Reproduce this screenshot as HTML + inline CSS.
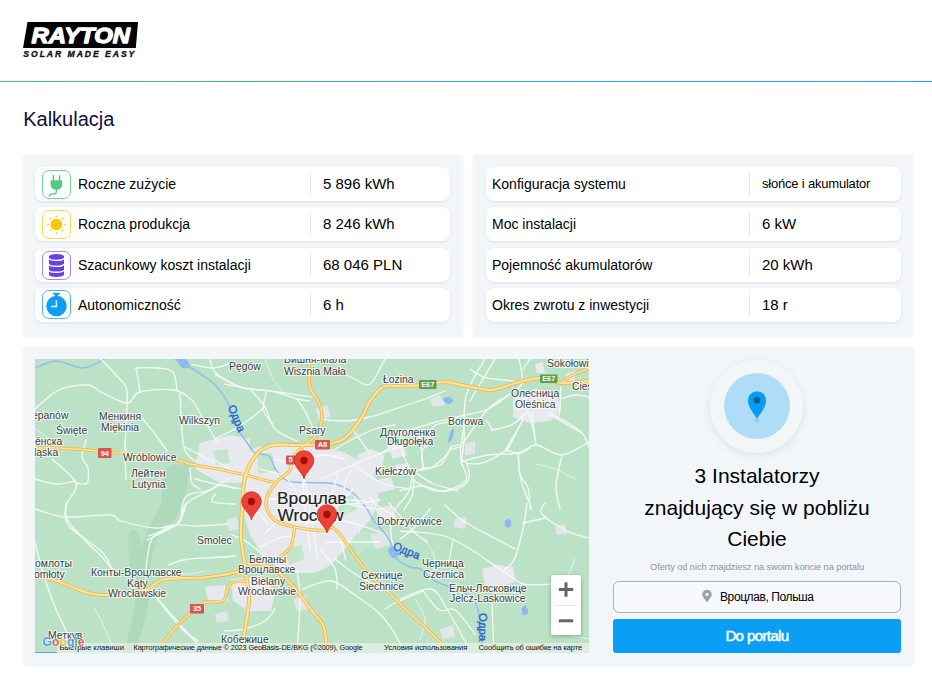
<!DOCTYPE html>
<html><head><meta charset="utf-8">
<style>
*{box-sizing:border-box;margin:0;padding:0}
html,body{width:932px;height:684px;overflow:hidden;background:#fff;font-family:"Liberation Sans",sans-serif;color:#000}
.abs{position:absolute}
.hline{position:absolute;left:0;top:81px;width:932px;height:1px;background:linear-gradient(90deg,#3cbf9e,#1aa6e4)}
.title{position:absolute;left:23.2px;top:108px;font-size:20px;line-height:23px;color:#0d0f3a}
.panel{position:absolute;background:#f3f6f9;border-radius:4px;box-shadow:0 1px 3px rgba(20,40,80,.06)}
.card{position:absolute;background:#fff;border-radius:8px;box-shadow:0 1px 3px rgba(20,40,80,.10);height:34px}
.card .lbl{position:absolute;top:8px;font-size:14px;line-height:18px;white-space:nowrap}
.card .div{position:absolute;top:6px;width:1px;height:22px;background:#e3e6ec}
.card .val{position:absolute;top:8px;font-size:15px;line-height:18px;white-space:nowrap}
.ico{position:absolute;left:7px;top:3px;width:29px;height:29px;border-radius:7px;border:1px solid}
.ico svg{position:absolute;left:-1px;top:-1px}
</style></head><body>
<!-- logo -->
<svg class="abs" style="left:0;top:0" width="160" height="70">
  <polygon points="27.5,22 138,22 135.8,48 23,48" fill="#000"/>
  <text x="31.5" y="42.8" font-family="Liberation Sans" font-weight="bold" font-style="italic" font-size="21.5" fill="#fff" stroke="#fff" stroke-width="1.3" stroke-linejoin="round" textLength="98.5" lengthAdjust="spacingAndGlyphs">RAYTON</text>
  <text x="23.3" y="56.8" font-family="Liberation Sans" font-weight="bold" font-style="italic" font-size="8.6" fill="#111" stroke="#111" stroke-width="0.35" textLength="111" lengthAdjust="spacing">SOLAR MADE EASY</text>
</svg>
<div class="hline"></div>
<div class="title">Kalkulacja</div>

<div class="panel" style="left:22.5px;top:155px;width:440px;height:180.5px"></div>
<div class="panel" style="left:473px;top:155px;width:440px;height:180.5px"></div>

<!-- left cards -->
<div class="card" style="left:35px;top:167px;width:415px">
  <div class="ico" style="border-color:#72d39f"><svg width="29" height="29" viewBox="2.2 3.7 28.6 28.9" preserveAspectRatio="none">
<rect x="12.8" y="8.8" width="1.4" height="5.6" fill="#52c986"/><rect x="18.8" y="8.8" width="1.4" height="5.6" fill="#52c986"/>
<path d="M10.7 14 H22.1 V18.2 C22.1 21.6 19.6 23.4 16.4 23.4 C13.2 23.4 10.7 21.6 10.7 18.2 Z" fill="#52c986"/>
<path d="M16.4 23 V25.2 C16.4 27.3 14.8 27.8 13.2 27.5 C11.4 27.2 10.2 27.9 9.2 29.6" fill="none" stroke="#52c986" stroke-width="1.3" stroke-linecap="round"/>
</svg></div>
  <div class="lbl" style="left:43px">Roczne zużycie</div>
  <div class="div" style="left:275px"></div>
  <div class="val" style="left:288px">5 896 kWh</div>
</div>
<div class="card" style="left:35px;top:207px;width:415px">
  <div class="ico" style="border-color:#ffd54f;top:2.5px"><svg width="29" height="29" viewBox="2.2 3.5 28.6 29.1" preserveAspectRatio="none">
<circle cx="16.4" cy="18" r="5.7" fill="#ffc400"/><line x1="16.40" y1="10.20" x2="16.40" y2="9.40" stroke="#ffc400" stroke-width="1.3" stroke-linecap="round"/><line x1="21.92" y1="12.48" x2="22.48" y2="11.92" stroke="#ffc400" stroke-width="1.3" stroke-linecap="round"/><line x1="24.20" y1="18.00" x2="25.00" y2="18.00" stroke="#ffc400" stroke-width="1.3" stroke-linecap="round"/><line x1="21.92" y1="23.52" x2="22.48" y2="24.08" stroke="#ffc400" stroke-width="1.3" stroke-linecap="round"/><line x1="16.40" y1="25.80" x2="16.40" y2="26.60" stroke="#ffc400" stroke-width="1.3" stroke-linecap="round"/><line x1="10.88" y1="23.52" x2="10.32" y2="24.08" stroke="#ffc400" stroke-width="1.3" stroke-linecap="round"/><line x1="8.60" y1="18.00" x2="7.80" y2="18.00" stroke="#ffc400" stroke-width="1.3" stroke-linecap="round"/><line x1="10.88" y1="12.48" x2="10.32" y2="11.92" stroke="#ffc400" stroke-width="1.3" stroke-linecap="round"/>
</svg></div>
  <div class="lbl" style="left:43px">Roczna produkcja</div>
  <div class="div" style="left:275px"></div>
  <div class="val" style="left:288px">8 246 kWh</div>
</div>
<div class="card" style="left:35px;top:247.5px;width:415px">
  <div class="ico" style="border-color:#a884f0"><svg width="29" height="29" viewBox="2.2 3.6 28.6 28.6" preserveAspectRatio="none">
<path d="M9.1 9.1 A7.4 2.65 0 0 1 23.9 9.1 V26.8 A7.4 2.5 0 0 1 9.1 26.8 Z" fill="#6b3fe2"/>
<path d="M9 10.6 A7.5 2.3 0 0 0 24 10.6" fill="none" stroke="#fff" stroke-width="1.35"/>
<path d="M9 16.5 A7.5 2.3 0 0 0 24 16.5" fill="none" stroke="#fff" stroke-width="1.35"/>
<path d="M9 22.3 A7.5 2.3 0 0 0 24 22.3" fill="none" stroke="#fff" stroke-width="1.35"/>
</svg></div>
  <div class="lbl" style="left:43px">Szacunkowy koszt instalacji</div>
  <div class="div" style="left:275px"></div>
  <div class="val" style="left:288px">68 046 PLN</div>
</div>
<div class="card" style="left:35px;top:288px;width:415px">
  <div class="ico" style="border-color:#4db5f5;top:2.2px"><svg width="29" height="29" viewBox="2.2 3.2 28.6 28.6" preserveAspectRatio="none">
<rect x="13" y="6.1" width="6.9" height="1.6" fill="#0a9ef7"/><rect x="15" y="7" width="2.9" height="3" fill="#0a9ef7"/>
<circle cx="16.5" cy="19" r="10.1" fill="#0a9ef7"/>
<path d="M16.4 13.2 V19.4 H11" fill="none" stroke="#fff" stroke-width="1.4"/>
</svg></div>
  <div class="lbl" style="left:43px">Autonomiczność</div>
  <div class="div" style="left:275px"></div>
  <div class="val" style="left:288px">6 h</div>
</div>

<!-- right cards -->
<div class="card" style="left:486px;top:167px;width:415px">
  <div class="lbl" style="left:6px">Konfiguracja systemu</div>
  <div class="div" style="left:263px"></div>
  <div class="val" style="left:276px;font-size:13px;letter-spacing:-0.2px">słońce i akumulator</div>
</div>
<div class="card" style="left:486px;top:207px;width:415px">
  <div class="lbl" style="left:6px">Moc instalacji</div>
  <div class="div" style="left:263px"></div>
  <div class="val" style="left:276px">6 kW</div>
</div>
<div class="card" style="left:486px;top:247.5px;width:415px">
  <div class="lbl" style="left:6px">Pojemność akumulatorów</div>
  <div class="div" style="left:263px"></div>
  <div class="val" style="left:276px">20 kWh</div>
</div>
<div class="card" style="left:486px;top:288px;width:415px">
  <div class="lbl" style="left:6px">Okres zwrotu z inwestycji</div>
  <div class="div" style="left:263px"></div>
  <div class="val" style="left:276px">18 r</div>
</div>

<!-- bottom panel -->
<div class="panel" style="left:22.5px;top:347px;width:891px;height:318px"></div>
<div id="map" class="abs" style="left:35px;top:359px;width:554px;height:294px;background:#bbe2c6;overflow:hidden">
<svg width="554" height="294" viewBox="0 0 554 294" style="position:absolute;left:0;top:0">
<rect width="554" height="294" fill="#bbe2c6"/>
<path d="M140.0 110.0 C135.0 116.2 130.5 134.8 126.0 145.0 C121.5 155.2 116.7 162.2 113.0 171.0 C109.3 179.8 106.0 189.2 104.0 198.0 C102.0 206.8 101.7 215.8 101.0 224.0 C100.3 232.2 101.5 237.3 100.0 247.0 C98.5 256.7 93.7 274.2 92.0 282.0 C90.3 289.8 88.7 292.0 90.0 294.0 C91.3 296.0 97.7 296.0 100.0 294.0 C102.3 292.0 101.8 289.8 104.0 282.0 C106.2 274.2 111.3 256.7 113.0 247.0 C114.7 237.3 113.3 232.2 114.0 224.0 C114.7 215.8 115.0 206.8 117.0 198.0 C119.0 189.2 122.0 179.8 126.0 171.0 C130.0 162.2 136.0 155.5 141.0 145.0 C146.0 134.5 156.2 113.8 156.0 108.0 C155.8 102.2 145.0 103.8 140.0 110.0Z" fill="#aed9ba"/>
<path d="M130.0 112.0 C133.7 103.3 146.3 105.0 150.0 108.0 C153.7 111.0 153.7 121.3 152.0 130.0 C150.3 138.7 144.0 155.0 140.0 160.0 C136.0 165.0 129.7 168.0 128.0 160.0 C126.3 152.0 126.3 120.7 130.0 112.0Z" fill="#aed9ba"/>
<path d="M94.0 176.0 C95.3 170.0 102.0 170.3 104.0 176.0 C106.0 181.7 107.3 204.0 106.0 210.0 C104.7 216.0 98.0 217.7 96.0 212.0 C94.0 206.3 92.7 182.0 94.0 176.0Z" fill="#aed9ba"/>
<polygon points="209.0,95.0 222.0,88.0 240.0,86.0 262.0,86.0 290.0,88.0 310.0,94.0 330.0,104.0 342.0,122.0 344.0,142.0 336.0,160.0 322.0,175.0 310.0,190.0 296.0,206.0 280.0,214.0 262.0,214.0 242.0,208.0 228.0,196.0 216.0,178.0 210.0,160.0 207.0,130.0" fill="#e8e9ee"/>
<polygon points="165.0,84.0 195.0,76.0 215.0,80.0 214.0,106.0 207.0,124.0 185.0,124.0 160.0,110.0" fill="#e8e9ee"/>
<polygon points="322.0,96.0 336.0,90.0 350.0,96.0 346.0,112.0 332.0,118.0" fill="#e8e9ee"/>
<polygon points="352.0,86.0 368.0,84.0 372.0,96.0 358.0,100.0" fill="#e8e9ee"/>
<polygon points="338.0,122.0 356.0,118.0 360.0,130.0 344.0,134.0" fill="#e8e9ee"/>
<polygon points="360.0,106.0 372.0,104.0 374.0,114.0 362.0,116.0" fill="#e8e9ee"/>
<polygon points="196.0,220.0 225.0,218.0 240.0,232.0 236.0,252.0 214.0,252.0 198.0,242.0" fill="#e8e9ee"/>
<polygon points="170.0,228.0 190.0,226.0 193.0,242.0 174.0,244.0" fill="#e8e9ee"/>
<polygon points="478.0,40.0 500.0,30.0 522.0,36.0 526.0,50.0 515.0,62.0 495.0,64.0 478.0,58.0" fill="#e8e9ee"/>
<polygon points="500.0,5.0 508.0,3.0 510.0,14.0 502.0,14.0" fill="#e8e9ee"/>
<polygon points="530.0,15.0 540.0,12.0 540.0,22.0 532.0,22.0" fill="#e8e9ee"/>
<polygon points="447.0,210.0 462.0,206.0 478.0,208.0 481.0,222.0 466.0,228.0 450.0,226.0" fill="#e8e9ee"/>
<polygon points="340.0,150.0 356.0,146.0 362.0,160.0 348.0,166.0" fill="#e8e9ee"/>
<polygon points="222.0,94.0 237.0,94.0 240.0,112.0 224.0,115.0" fill="#c3e5cc"/>
<polygon points="300.0,140.0 318.0,136.0 322.0,150.0 306.0,158.0" fill="#c3e5cc"/>
<polygon points="250.0,190.0 266.0,186.0 270.0,200.0 254.0,206.0" fill="#c3e5cc"/>
<polygon points="318.0,178.0 332.0,170.0 338.0,186.0 322.0,196.0" fill="#c3e5cc"/>
<polygon points="178.0,92.0 192.0,90.0 195.0,104.0 181.0,106.0" fill="#c3e5cc"/>
<polygon points="395.0,40.0 405.0,36.0 410.0,46.0 398.0,48.0" fill="#e1e7e6"/>
<polygon points="280.0,50.0 292.0,46.0 296.0,58.0 284.0,60.0" fill="#e1e7e6"/>
<polygon points="420.0,160.0 432.0,158.0 430.0,170.0 418.0,168.0" fill="#e1e7e6"/>
<polygon points="405.0,270.0 418.0,266.0 420.0,278.0 408.0,280.0" fill="#e1e7e6"/>
<polygon points="152.0,60.0 160.0,56.0 162.0,66.0 154.0,66.0" fill="#e1e7e6"/>
<polygon points="335.0,175.0 352.0,172.0 356.0,186.0 340.0,190.0" fill="#e1e7e6"/>
<polygon points="192.0,160.0 202.0,158.0 204.0,170.0 194.0,172.0" fill="#e1e7e6"/>
<polygon points="258.0,240.0 270.0,236.0 274.0,250.0 262.0,252.0" fill="#e1e7e6"/>
<polygon points="180.0,255.0 192.0,252.0 194.0,262.0 182.0,264.0" fill="#e1e7e6"/>
<polygon points="430.0,85.0 440.0,82.0 440.0,95.0 430.0,96.0" fill="#e1e7e6"/>
<polygon points="520.0,168.0 530.0,165.0 532.0,175.0 522.0,176.0" fill="#e1e7e6"/>
<path d="M142.0 1.0 C142.3 -0.5 147.8 -1.0 150.0 0.0 C152.2 1.0 155.3 5.5 155.0 7.0 C154.7 8.5 150.2 10.0 148.0 9.0 C145.8 8.0 141.7 2.5 142.0 1.0Z" fill="#8ab8f0"/>
<path d="M408.0 40.0 C408.2 38.8 412.3 37.7 414.0 38.0 C415.7 38.3 418.2 40.8 418.0 42.0 C417.8 43.2 414.7 45.3 413.0 45.0 C411.3 44.7 407.8 41.2 408.0 40.0Z" fill="#8ab8f0"/>
<path d="M353.0 191.0 C353.2 189.0 357.2 186.3 359.0 187.0 C360.8 187.7 364.2 193.0 364.0 195.0 C363.8 197.0 359.8 199.7 358.0 199.0 C356.2 198.3 352.8 193.0 353.0 191.0Z" fill="#8ab8f0"/>
<path d="M470.0 162.0 C470.7 160.7 474.0 159.2 475.0 160.0 C476.0 160.8 476.7 165.7 476.0 167.0 C475.3 168.3 472.0 168.8 471.0 168.0 C470.0 167.2 469.3 163.3 470.0 162.0Z" fill="#8ab8f0"/>
<path d="M487.0 249.0 C487.5 247.5 490.0 246.2 491.0 247.0 C492.0 247.8 493.5 252.5 493.0 254.0 C492.5 255.5 489.0 256.8 488.0 256.0 C487.0 255.2 486.5 250.5 487.0 249.0Z" fill="#8ab8f0"/>
<path d="M416.0 72.0 C417.0 70.0 418.8 69.7 419.0 71.0 C419.2 72.3 418.0 78.0 417.0 80.0 C416.0 82.0 413.2 84.3 413.0 83.0 C412.8 81.7 415.0 74.0 416.0 72.0Z" fill="#8ab8f0"/>
<path d="M140.0 0.0 C142.2 1.2 148.0 4.0 153.0 7.0 C158.0 10.0 165.2 14.5 170.0 18.0 C174.8 21.5 178.2 23.7 182.0 28.0 C185.8 32.3 190.0 38.3 193.0 44.0 C196.0 49.7 198.2 57.3 200.0 62.0 C201.8 66.7 201.8 68.2 204.0 72.0 C206.2 75.8 210.3 81.3 213.0 85.0 C215.7 88.7 216.5 92.0 220.0 94.0 C223.5 96.0 230.5 94.2 234.0 97.0 C237.5 99.8 237.8 106.8 241.0 111.0 C244.2 115.2 247.5 119.9 253.0 122.0 C258.5 124.1 266.2 123.1 274.0 123.6 C281.8 124.1 292.7 123.3 300.0 125.0 C307.3 126.7 312.7 129.8 318.0 134.0 C323.3 138.2 328.5 145.3 332.0 150.0 C335.5 154.7 336.2 158.2 339.0 162.0 C341.8 165.8 346.2 169.2 349.0 173.0 C351.8 176.8 353.8 180.5 356.0 185.0 C358.2 189.5 358.8 196.2 362.0 200.0 C365.2 203.8 371.2 206.3 375.0 208.0 C378.8 209.7 380.8 207.7 385.0 210.0 C389.2 212.3 394.2 218.7 400.0 222.0 C405.8 225.3 413.7 227.0 420.0 230.0 C426.3 233.0 433.8 235.0 438.0 240.0 C442.2 245.0 443.3 251.0 445.0 260.0 C446.7 269.0 447.5 288.3 448.0 294.0" fill="none" stroke="#94bcef" stroke-width="1.5"/>
<path d="M0.0 9.0 C3.7 7.8 14.0 2.0 22.0 2.0 C30.0 2.0 40.0 9.3 48.0 9.0 C56.0 8.7 66.3 1.5 70.0 0.0" fill="none" stroke="#94bcef" stroke-width="1.5"/>
<path d="M180.0 15.3 C184.3 17.4 197.4 25.5 206.0 28.2 C214.6 30.9 219.9 29.8 231.7 31.4 C243.5 33.0 269.3 36.7 276.8 37.8" fill="none" stroke="#f4fbf6" stroke-width="1.3" stroke-linecap="round" stroke-linejoin="round"/>
<path d="M231.7 31.4 C231.2 34.6 227.4 45.0 228.5 50.7 C229.6 56.4 236.4 63.3 238.0 65.8" fill="none" stroke="#f4fbf6" stroke-width="1.3" stroke-linecap="round" stroke-linejoin="round"/>
<path d="M157.7 5.7 C161.4 6.2 173.0 9.5 180.0 8.9 C187.0 8.3 196.2 3.5 199.5 2.4" fill="none" stroke="#f4fbf6" stroke-width="1.3" stroke-linecap="round" stroke-linejoin="round"/>
<path d="M113.0 177.0 C117.8 175.1 135.7 170.7 142.0 165.4 C148.3 160.1 146.1 150.4 151.0 145.0 C155.9 139.6 164.3 137.4 171.6 133.0 C178.9 128.6 191.1 121.0 195.0 118.6" fill="none" stroke="#f4fbf6" stroke-width="1.3" stroke-linecap="round" stroke-linejoin="round"/>
<path d="M119.0 235.6 C123.3 241.0 137.7 260.3 145.0 268.0 C152.3 275.7 160.0 279.7 163.0 282.0" fill="none" stroke="#f4fbf6" stroke-width="1.3" stroke-linecap="round" stroke-linejoin="round"/>
<path d="M133.5 206.0 C136.4 205.1 140.8 201.9 151.0 200.5 C161.2 199.1 187.7 198.1 195.0 197.6" fill="none" stroke="#f4fbf6" stroke-width="1.3" stroke-linecap="round" stroke-linejoin="round"/>
<path d="M525.7 28.0 C525.5 32.4 525.5 49.5 524.3 54.6 C523.1 59.7 519.6 58.1 518.7 58.8" fill="none" stroke="#f4fbf6" stroke-width="1.3" stroke-linecap="round" stroke-linejoin="round"/>
<path d="M493.6 51.8 L500.6 80.9" fill="none" stroke="#f4fbf6" stroke-width="1.3" stroke-linecap="round" stroke-linejoin="round"/>
<path d="M493.6 51.8 C490.8 54.1 483.1 62.5 476.8 65.7 C470.5 69.0 459.5 70.4 456.0 71.3" fill="none" stroke="#f4fbf6" stroke-width="1.3" stroke-linecap="round" stroke-linejoin="round"/>
<path d="M513.0 54.6 L546.6 74.0" fill="none" stroke="#f4fbf6" stroke-width="1.3" stroke-linecap="round" stroke-linejoin="round"/>
<path d="M435.0 10.0 C437.3 11.4 443.2 16.5 449.0 18.3 C454.8 20.1 463.5 20.1 470.0 21.0 C476.5 21.9 485.0 23.5 488.0 24.0" fill="none" stroke="#f4fbf6" stroke-width="1.3" stroke-linecap="round" stroke-linejoin="round"/>
<path d="M460.0 0.0 C458.2 3.1 453.2 11.3 449.0 18.3 C444.8 25.3 437.3 38.0 435.0 42.0" fill="none" stroke="#f4fbf6" stroke-width="1.3" stroke-linecap="round" stroke-linejoin="round"/>
<path d="M495.0 0.0 L488.0 10.0" fill="none" stroke="#f4fbf6" stroke-width="1.3" stroke-linecap="round" stroke-linejoin="round"/>
<path d="M526.0 40.0 C528.3 39.3 535.3 36.3 540.0 36.0 C544.7 35.7 551.7 37.7 554.0 38.0" fill="none" stroke="#f4fbf6" stroke-width="1.3" stroke-linecap="round" stroke-linejoin="round"/>
<path d="M354.0 144.0 C356.0 146.3 361.8 153.2 366.0 158.0 C370.2 162.8 374.7 168.8 379.0 173.0 C383.3 177.2 389.8 181.3 392.0 183.0" fill="none" stroke="#f4fbf6" stroke-width="1.3" stroke-linecap="round" stroke-linejoin="round"/>
<path d="M410.0 146.0 C413.3 148.8 420.8 157.0 430.0 163.0 C439.2 169.0 456.7 177.5 465.0 182.0 C473.3 186.5 477.5 188.7 480.0 190.0" fill="none" stroke="#f4fbf6" stroke-width="1.3" stroke-linecap="round" stroke-linejoin="round"/>
<path d="M388.0 232.0 C383.3 234.0 366.3 241.0 360.0 244.0 C353.7 247.0 351.7 249.0 350.0 250.0" fill="none" stroke="#f4fbf6" stroke-width="1.3" stroke-linecap="round" stroke-linejoin="round"/>
<path d="M388.0 232.0 C390.7 235.2 398.7 247.8 404.0 251.0 C409.3 254.2 414.0 247.0 420.0 251.0 C426.0 255.0 436.7 271.0 440.0 275.0" fill="none" stroke="#f4fbf6" stroke-width="1.3" stroke-linecap="round" stroke-linejoin="round"/>
<path d="M365.0 180.0 C367.2 178.3 373.0 175.0 378.0 170.0 C383.0 165.0 392.2 153.3 395.0 150.0" fill="none" stroke="#f4fbf6" stroke-width="1.3" stroke-linecap="round" stroke-linejoin="round"/>
<path d="M269.7 121.5 C270.6 126.3 272.8 137.2 275.0 150.5 C277.2 163.8 281.7 192.6 283.0 201.0" fill="none" stroke="#f4fbf6" stroke-width="1.3" stroke-linecap="round" stroke-linejoin="round"/>
<path d="M225.0 140.0 C228.3 140.2 235.9 140.3 244.7 141.0 C253.5 141.7 265.6 143.3 277.6 144.0 C289.7 144.7 305.8 145.5 317.0 145.0 C328.2 144.5 340.3 141.7 345.0 141.0" fill="none" stroke="#f4fbf6" stroke-width="1.3" stroke-linecap="round" stroke-linejoin="round"/>
<path d="M251.0 161.0 C255.0 161.4 266.2 163.6 275.0 163.6 C283.8 163.6 292.3 159.5 304.0 161.0 C315.7 162.5 338.2 170.8 345.0 172.8" fill="none" stroke="#f4fbf6" stroke-width="1.3" stroke-linecap="round" stroke-linejoin="round"/>
<path d="M304.0 111.0 C302.7 115.3 298.7 128.2 296.0 137.0 C293.3 145.8 289.3 159.2 288.0 163.6" fill="none" stroke="#f4fbf6" stroke-width="1.3" stroke-linecap="round" stroke-linejoin="round"/>
<path d="M271.0 111.0 C270.5 113.2 268.5 119.7 268.0 124.0 C267.5 128.3 268.0 134.8 268.0 137.0" fill="none" stroke="#f4fbf6" stroke-width="1.3" stroke-linecap="round" stroke-linejoin="round"/>
<path d="M304.0 171.5 L310.5 201.0" fill="none" stroke="#f4fbf6" stroke-width="1.3" stroke-linecap="round" stroke-linejoin="round"/>
<path d="M317.0 111.0 C315.9 113.2 311.3 118.5 310.5 124.0 C309.7 129.5 306.2 139.6 312.0 144.0 C317.8 148.4 339.5 149.4 345.0 150.5" fill="none" stroke="#f4fbf6" stroke-width="1.3" stroke-linecap="round" stroke-linejoin="round"/>
<path d="M225.0 188.0 C228.2 186.5 238.5 180.8 244.0 179.0 C249.5 177.2 255.7 177.3 258.0 177.0" fill="none" stroke="#f4fbf6" stroke-width="1.3" stroke-linecap="round" stroke-linejoin="round"/>
<path d="M291.0 183.0 C295.8 183.0 311.0 183.0 320.0 183.0 C329.0 183.0 340.8 183.0 345.0 183.0" fill="none" stroke="#f4fbf6" stroke-width="1.3" stroke-linecap="round" stroke-linejoin="round"/>
<path d="M240.0 100.0 C242.5 100.7 250.0 104.0 255.0 104.0 C260.0 104.0 264.2 101.3 270.0 100.0 C275.8 98.7 283.3 96.0 290.0 96.0 C296.7 96.0 306.7 99.3 310.0 100.0" fill="none" stroke="#f4fbf6" stroke-width="1.3" stroke-linecap="round" stroke-linejoin="round"/>
<path d="M215.0 150.0 C216.7 150.8 222.2 152.5 225.0 155.0 C227.8 157.5 230.8 163.3 232.0 165.0" fill="none" stroke="#f4fbf6" stroke-width="1.3" stroke-linecap="round" stroke-linejoin="round"/>
<path d="M345.0 94.8 C348.5 93.5 358.0 90.3 366.0 86.8 C374.0 83.3 387.2 77.5 393.0 74.0 C398.8 70.5 395.6 68.0 401.0 65.8 C406.4 63.6 421.4 61.8 425.5 61.0" fill="none" stroke="#f4fbf6" stroke-width="1.3" stroke-linecap="round" stroke-linejoin="round"/>
<path d="M366.0 86.8 C366.5 88.7 367.2 93.5 369.0 98.0 C370.8 102.5 375.4 110.0 377.0 114.0 C378.6 118.0 378.8 118.2 378.8 122.0 C378.8 125.8 378.6 131.8 377.0 136.6 C375.4 141.4 370.3 148.6 369.0 151.0" fill="none" stroke="#f4fbf6" stroke-width="1.3" stroke-linecap="round" stroke-linejoin="round"/>
<path d="M377.0 114.0 C378.9 113.2 385.0 110.0 388.5 109.0 C392.0 108.0 394.0 110.1 398.0 107.7 C402.0 105.3 409.6 98.0 412.6 94.8 C415.6 91.6 413.4 90.0 415.8 88.4 C418.2 86.8 425.1 85.6 427.0 85.0" fill="none" stroke="#f4fbf6" stroke-width="1.3" stroke-linecap="round" stroke-linejoin="round"/>
<path d="M388.5 109.0 C388.2 106.3 386.3 96.7 386.8 93.0 C387.3 89.3 390.9 87.8 391.7 86.8" fill="none" stroke="#f4fbf6" stroke-width="1.3" stroke-linecap="round" stroke-linejoin="round"/>
<path d="M428.7 67.4 C428.2 72.5 424.9 91.8 425.5 98.0 C426.1 104.2 430.7 100.7 432.0 104.5 C433.3 108.3 435.2 116.3 433.5 120.6 C431.8 124.8 427.4 128.1 422.0 130.0 C416.6 131.9 407.2 132.6 401.0 131.8 C394.8 131.0 389.0 127.3 385.0 125.4 C381.0 123.5 378.3 121.4 377.0 120.6" fill="none" stroke="#f4fbf6" stroke-width="1.3" stroke-linecap="round" stroke-linejoin="round"/>
<path d="M432.0 104.5 C434.1 104.5 440.5 105.3 444.8 104.5 C449.1 103.7 453.2 101.8 457.7 99.6 C462.2 97.4 467.7 92.4 472.0 91.6 C476.3 90.8 479.6 95.2 483.4 94.8 C487.2 94.4 493.1 90.0 495.0 89.0" fill="none" stroke="#f4fbf6" stroke-width="1.3" stroke-linecap="round" stroke-linejoin="round"/>
<path d="M472.0 91.6 L488.0 61.0" fill="none" stroke="#f4fbf6" stroke-width="1.3" stroke-linecap="round" stroke-linejoin="round"/>
<path d="M483.4 94.8 C483.7 98.3 483.4 110.1 485.0 115.7 C486.6 121.3 491.3 122.7 493.0 128.6 C494.7 134.5 494.7 147.3 495.0 151.0" fill="none" stroke="#f4fbf6" stroke-width="1.3" stroke-linecap="round" stroke-linejoin="round"/>
<path d="M451.0 61.0 L457.7 70.7" fill="none" stroke="#f4fbf6" stroke-width="1.3" stroke-linecap="round" stroke-linejoin="round"/>
<path d="M180.0 80.0 C183.3 78.3 194.2 73.3 200.0 70.0 C205.8 66.7 210.0 63.7 215.0 60.0 C220.0 56.3 227.5 50.0 230.0 48.0" fill="none" stroke="#f4fbf6" stroke-width="1.3" stroke-linecap="round" stroke-linejoin="round"/>
<path d="M150.0 88.0 C152.5 89.3 160.0 93.3 165.0 96.0 C170.0 98.7 177.5 102.7 180.0 104.0" fill="none" stroke="#f4fbf6" stroke-width="1.3" stroke-linecap="round" stroke-linejoin="round"/>
<path d="M196.0 175.0 C199.2 176.7 209.0 180.8 215.0 185.0 C221.0 189.2 229.2 197.5 232.0 200.0" fill="none" stroke="#f4fbf6" stroke-width="1.3" stroke-linecap="round" stroke-linejoin="round"/>
<path d="M262.0 40.0 C263.3 42.0 266.8 46.0 270.0 52.0 C273.2 58.0 279.2 72.0 281.0 76.0" fill="none" stroke="#f4fbf6" stroke-width="1.3" stroke-linecap="round" stroke-linejoin="round"/>
<path d="M300.0 90.0 C303.0 88.3 311.3 83.3 318.0 80.0 C324.7 76.7 333.0 72.3 340.0 70.0 C347.0 67.7 356.7 66.7 360.0 66.0" fill="none" stroke="#f4fbf6" stroke-width="1.3" stroke-linecap="round" stroke-linejoin="round"/>
<path d="M66.0 0.0 C68.3 2.5 75.8 10.3 80.0 15.0 C84.2 19.7 89.0 23.2 91.0 28.0 C93.0 32.8 92.0 37.0 92.0 44.0 C92.0 51.0 91.3 62.0 91.0 70.0 C90.7 78.0 90.0 83.7 90.0 92.0 C90.0 100.3 90.8 115.3 91.0 120.0" fill="none" stroke="#f4fbf6" stroke-width="1.3" stroke-linecap="round" stroke-linejoin="round"/>
<path d="M0.0 50.0 C4.0 46.8 15.2 35.0 24.0 31.0 C32.8 27.0 46.0 25.7 53.0 26.0 C60.0 26.3 59.5 30.0 66.0 33.0 C72.5 36.0 85.5 44.0 92.0 44.0 C98.5 44.0 97.0 35.2 105.0 33.0 C113.0 30.8 131.2 29.5 140.0 31.0 C148.8 32.5 155.0 40.2 158.0 42.0" fill="none" stroke="#f4fbf6" stroke-width="1.3" stroke-linecap="round" stroke-linejoin="round"/>
<path d="M101.0 9.0 C104.7 9.0 116.8 8.3 123.0 9.0 C129.2 9.7 134.8 9.3 138.0 13.0 C141.2 16.7 141.3 28.0 142.0 31.0" fill="none" stroke="#f4fbf6" stroke-width="1.3" stroke-linecap="round" stroke-linejoin="round"/>
<path d="M101.0 9.0 C101.3 10.8 102.3 16.0 103.0 20.0 C103.7 24.0 104.7 30.8 105.0 33.0" fill="none" stroke="#f4fbf6" stroke-width="1.3" stroke-linecap="round" stroke-linejoin="round"/>
<path d="M107.0 59.0 C109.2 61.7 115.8 69.5 120.0 75.0 C124.2 80.5 130.0 89.2 132.0 92.0" fill="none" stroke="#f4fbf6" stroke-width="1.3" stroke-linecap="round" stroke-linejoin="round"/>
<path d="M145.0 35.0 C145.7 43.8 146.2 76.7 149.0 88.0 C151.8 99.3 159.8 100.5 162.0 103.0" fill="none" stroke="#f4fbf6" stroke-width="1.3" stroke-linecap="round" stroke-linejoin="round"/>
<path d="M158.0 42.0 L182.0 83.0" fill="none" stroke="#f4fbf6" stroke-width="1.3" stroke-linecap="round" stroke-linejoin="round"/>
<path d="M17.0 100.0 C21.0 104.0 38.5 116.5 41.0 124.0 C43.5 131.5 33.5 139.0 32.0 145.0 C30.5 151.0 29.2 154.2 32.0 160.0 C34.8 165.8 43.3 173.8 49.0 180.0 C54.7 186.2 61.3 192.0 66.0 197.0 C70.7 202.0 75.2 207.8 77.0 210.0" fill="none" stroke="#f4fbf6" stroke-width="1.3" stroke-linecap="round" stroke-linejoin="round"/>
<path d="M51.0 81.0 C50.3 83.8 46.7 93.3 47.0 98.0 C47.3 102.7 52.2 104.7 53.0 109.0 C53.8 113.3 54.0 121.5 52.0 124.0 C50.0 126.5 42.8 124.0 41.0 124.0" fill="none" stroke="#f4fbf6" stroke-width="1.3" stroke-linecap="round" stroke-linejoin="round"/>
<path d="M0.0 150.0 C5.0 151.3 17.5 157.0 30.0 158.0 C42.5 159.0 65.7 155.3 75.0 156.0 C84.3 156.7 78.5 159.8 86.0 162.0 C93.5 164.2 110.7 168.3 120.0 169.0 C129.3 169.7 134.8 166.3 142.0 166.0 C149.2 165.7 154.5 167.2 163.0 167.0 C171.5 166.8 188.0 165.3 193.0 165.0" fill="none" stroke="#f4fbf6" stroke-width="1.3" stroke-linecap="round" stroke-linejoin="round"/>
<path d="M146.0 162.0 C146.3 158.8 146.5 147.5 148.0 143.0 C149.5 138.5 151.0 136.8 155.0 135.0 C159.0 133.2 166.7 133.5 172.0 132.0 C177.3 130.5 182.3 126.3 187.0 126.0 C191.7 125.7 197.8 129.3 200.0 130.0" fill="none" stroke="#f4fbf6" stroke-width="1.3" stroke-linecap="round" stroke-linejoin="round"/>
<path d="M137.0 167.0 C133.8 168.8 122.2 172.3 118.0 178.0 C113.8 183.7 113.3 192.8 112.0 201.0 C110.7 209.2 110.3 222.7 110.0 227.0" fill="none" stroke="#f4fbf6" stroke-width="1.3" stroke-linecap="round" stroke-linejoin="round"/>
<path d="M180.0 135.0 C179.7 136.3 174.7 141.3 178.0 143.0 C181.3 144.7 196.3 144.7 200.0 145.0" fill="none" stroke="#f4fbf6" stroke-width="1.3" stroke-linecap="round" stroke-linejoin="round"/>
<path d="M155.0 109.0 C155.3 111.5 155.3 120.5 157.0 124.0 C158.7 127.5 163.7 129.0 165.0 130.0" fill="none" stroke="#f4fbf6" stroke-width="1.3" stroke-linecap="round" stroke-linejoin="round"/>
<path d="M90.0 81.0 L91.0 94.0" fill="none" stroke="#f4fbf6" stroke-width="1.3" stroke-linecap="round" stroke-linejoin="round"/>
<path d="M175.0 0.0 C175.8 2.2 175.8 8.7 180.0 13.0 C184.2 17.3 194.2 23.2 200.0 26.0 C205.8 28.8 212.5 29.3 215.0 30.0" fill="none" stroke="#f4fbf6" stroke-width="1.3" stroke-linecap="round" stroke-linejoin="round"/>
<path d="M190.0 25.0 C194.2 25.8 206.7 28.7 215.0 30.0 C223.3 31.3 232.2 31.3 240.0 33.0 C247.8 34.7 256.2 38.5 262.0 40.0 C267.8 41.5 272.8 41.7 275.0 42.0" fill="none" stroke="#f4fbf6" stroke-width="1.3" stroke-linecap="round" stroke-linejoin="round"/>
<path d="M215.0 30.0 C217.5 33.0 225.8 41.3 230.0 48.0 C234.2 54.7 234.7 64.3 240.0 70.0 C245.3 75.7 258.3 80.0 262.0 82.0" fill="none" stroke="#f4fbf6" stroke-width="1.3" stroke-linecap="round" stroke-linejoin="round"/>
<path d="M300.0 10.0 C303.3 11.7 314.2 17.5 320.0 20.0 C325.8 22.5 330.0 28.3 335.0 25.0 C340.0 21.7 347.5 4.2 350.0 0.0" fill="none" stroke="#f4fbf6" stroke-width="1.3" stroke-linecap="round" stroke-linejoin="round"/>
<path d="M286.0 60.0 C290.0 60.3 301.8 62.3 310.0 62.0 C318.2 61.7 326.7 60.0 335.0 58.0 C343.3 56.0 350.8 53.0 360.0 50.0 C369.2 47.0 381.7 43.0 390.0 40.0 C398.3 37.0 406.7 33.3 410.0 32.0" fill="none" stroke="#f4fbf6" stroke-width="1.3" stroke-linecap="round" stroke-linejoin="round"/>
<path d="M286.0 120.0 C291.3 117.7 306.8 111.0 318.0 106.0 C329.2 101.0 343.7 95.8 353.0 90.0 C362.3 84.2 370.5 74.2 374.0 71.0" fill="none" stroke="#f4fbf6" stroke-width="1.3" stroke-linecap="round" stroke-linejoin="round"/>
<path d="M318.0 106.0 C323.2 109.2 340.3 121.2 349.0 125.0 C357.7 128.8 366.5 128.3 370.0 129.0" fill="none" stroke="#f4fbf6" stroke-width="1.3" stroke-linecap="round" stroke-linejoin="round"/>
<path d="M377.0 111.0 C376.5 114.5 377.2 124.8 374.0 132.0 C370.8 139.2 361.0 146.7 358.0 154.0 C355.0 161.3 355.7 169.8 356.0 176.0 C356.3 182.2 359.3 188.5 360.0 191.0" fill="none" stroke="#f4fbf6" stroke-width="1.3" stroke-linecap="round" stroke-linejoin="round"/>
<path d="M377.0 111.0 C380.3 113.2 389.3 120.5 397.0 124.0 C404.7 127.5 418.7 130.7 423.0 132.0" fill="none" stroke="#f4fbf6" stroke-width="1.3" stroke-linecap="round" stroke-linejoin="round"/>
<path d="M377.0 113.0 C381.7 111.8 398.8 109.5 405.0 106.0 C411.2 102.5 410.7 95.0 414.0 92.0 C417.3 89.0 423.2 88.7 425.0 88.0" fill="none" stroke="#f4fbf6" stroke-width="1.3" stroke-linecap="round" stroke-linejoin="round"/>
<path d="M384.0 71.0 C384.3 73.8 385.3 81.3 386.0 88.0 C386.7 94.7 387.7 107.2 388.0 111.0" fill="none" stroke="#f4fbf6" stroke-width="1.3" stroke-linecap="round" stroke-linejoin="round"/>
<path d="M335.0 138.0 C335.8 139.2 336.5 142.2 340.0 145.0 C343.5 147.8 353.3 153.3 356.0 155.0" fill="none" stroke="#f4fbf6" stroke-width="1.3" stroke-linecap="round" stroke-linejoin="round"/>
<path d="M318.0 71.0 C319.3 72.8 323.2 78.0 326.0 82.0 C328.8 86.0 333.5 92.8 335.0 95.0" fill="none" stroke="#f4fbf6" stroke-width="1.3" stroke-linecap="round" stroke-linejoin="round"/>
<path d="M425.0 88.0 C429.7 81.7 445.2 58.5 453.0 50.0 C460.8 41.5 466.3 41.3 472.0 37.0 C477.7 32.7 485.0 30.2 487.0 24.0 C489.0 17.8 484.5 4.0 484.0 0.0" fill="none" stroke="#f4fbf6" stroke-width="1.3" stroke-linecap="round" stroke-linejoin="round"/>
<path d="M450.0 0.0 C446.8 6.2 434.5 23.2 431.0 37.0 C427.5 50.8 429.8 72.0 429.0 83.0 C428.2 94.0 426.5 99.7 426.0 103.0" fill="none" stroke="#f4fbf6" stroke-width="1.3" stroke-linecap="round" stroke-linejoin="round"/>
<path d="M426.0 103.0 C430.5 101.8 443.5 97.5 453.0 96.0 C462.5 94.5 475.0 95.7 483.0 94.0 C491.0 92.3 493.7 85.7 501.0 86.0 C508.3 86.3 518.2 96.5 527.0 96.0 C535.8 95.5 549.5 85.2 554.0 83.0" fill="none" stroke="#f4fbf6" stroke-width="1.3" stroke-linecap="round" stroke-linejoin="round"/>
<path d="M497.0 53.0 L501.0 86.0" fill="none" stroke="#f4fbf6" stroke-width="1.3" stroke-linecap="round" stroke-linejoin="round"/>
<path d="M488.0 61.0 L470.0 92.0" fill="none" stroke="#f4fbf6" stroke-width="1.3" stroke-linecap="round" stroke-linejoin="round"/>
<path d="M483.0 94.0 C483.5 98.5 483.7 111.7 486.0 121.0 C488.3 130.3 495.2 145.2 497.0 150.0" fill="none" stroke="#f4fbf6" stroke-width="1.3" stroke-linecap="round" stroke-linejoin="round"/>
<path d="M527.0 96.0 C526.0 101.2 521.3 118.0 521.0 127.0 C520.7 136.0 524.3 146.2 525.0 150.0" fill="none" stroke="#f4fbf6" stroke-width="1.3" stroke-linecap="round" stroke-linejoin="round"/>
<path d="M514.0 53.0 C519.2 56.2 538.3 66.2 545.0 72.0 C551.7 77.8 552.5 85.3 554.0 88.0" fill="none" stroke="#f4fbf6" stroke-width="1.3" stroke-linecap="round" stroke-linejoin="round"/>
<path d="M426.0 103.0 C426.8 106.0 433.8 116.2 431.0 121.0 C428.2 125.8 416.3 131.0 409.0 132.0 C401.7 133.0 394.3 127.0 387.0 127.0 C379.7 127.0 368.7 131.2 365.0 132.0" fill="none" stroke="#f4fbf6" stroke-width="1.3" stroke-linecap="round" stroke-linejoin="round"/>
<path d="M472.0 37.0 C468.8 39.2 460.7 46.7 453.0 50.0 C445.3 53.3 435.2 54.7 426.0 57.0 C416.8 59.3 408.2 61.2 398.0 64.0 C387.8 66.8 370.5 72.3 365.0 74.0" fill="none" stroke="#f4fbf6" stroke-width="1.3" stroke-linecap="round" stroke-linejoin="round"/>
<path d="M31.0 144.0 C31.3 147.7 27.2 158.0 33.0 166.0 C38.8 174.0 58.7 184.7 66.0 192.0 C73.3 199.3 75.2 207.0 77.0 210.0" fill="none" stroke="#f4fbf6" stroke-width="1.3" stroke-linecap="round" stroke-linejoin="round"/>
<path d="M151.0 144.0 C149.7 147.3 149.5 157.8 143.0 164.0 C136.5 170.2 117.2 178.2 112.0 181.0" fill="none" stroke="#f4fbf6" stroke-width="1.3" stroke-linecap="round" stroke-linejoin="round"/>
<path d="M114.0 227.0 C115.5 229.2 115.7 231.2 123.0 240.0 C130.3 248.8 150.2 271.0 158.0 280.0 C165.8 289.0 168.0 291.7 170.0 294.0" fill="none" stroke="#f4fbf6" stroke-width="1.3" stroke-linecap="round" stroke-linejoin="round"/>
<path d="M0.0 184.0 C1.2 188.3 4.0 200.2 7.0 210.0 C10.0 219.8 13.7 232.0 18.0 243.0 C22.3 254.0 30.5 270.5 33.0 276.0" fill="none" stroke="#f4fbf6" stroke-width="1.3" stroke-linecap="round" stroke-linejoin="round"/>
<path d="M175.0 199.0 L200.0 197.0" fill="none" stroke="#f4fbf6" stroke-width="1.3" stroke-linecap="round" stroke-linejoin="round"/>
<path d="M365.0 172.0 C373.3 173.2 397.8 172.3 415.0 179.0 C432.2 185.7 455.8 204.3 468.0 212.0 C480.2 219.7 480.0 222.8 488.0 225.0 C496.0 227.2 511.3 225.0 516.0 225.0" fill="none" stroke="#f4fbf6" stroke-width="1.3" stroke-linecap="round" stroke-linejoin="round"/>
<path d="M510.0 144.0 C509.5 145.8 503.3 150.3 507.0 155.0 C510.7 159.7 524.2 168.0 532.0 172.0 C539.8 176.0 550.3 177.8 554.0 179.0" fill="none" stroke="#f4fbf6" stroke-width="1.3" stroke-linecap="round" stroke-linejoin="round"/>
<path d="M492.0 144.0 C491.3 148.3 490.2 160.5 488.0 170.0 C485.8 179.5 482.3 194.0 479.0 201.0 C475.7 208.0 469.8 210.2 468.0 212.0" fill="none" stroke="#f4fbf6" stroke-width="1.3" stroke-linecap="round" stroke-linejoin="round"/>
<path d="M365.0 240.0 C370.2 238.3 388.0 228.0 396.0 230.0 C404.0 232.0 407.2 243.0 413.0 252.0 C418.8 261.0 428.0 278.7 431.0 284.0" fill="none" stroke="#f4fbf6" stroke-width="1.3" stroke-linecap="round" stroke-linejoin="round"/>
<path d="M457.0 245.0 L459.0 294.0" fill="none" stroke="#f4fbf6" stroke-width="1.3" stroke-linecap="round" stroke-linejoin="round"/>
<path d="M488.0 164.0 L510.0 159.0" fill="none" stroke="#f4fbf6" stroke-width="1.3" stroke-linecap="round" stroke-linejoin="round"/>
<path d="M418.0 181.0 L413.0 208.0" fill="none" stroke="#f4fbf6" stroke-width="1.3" stroke-linecap="round" stroke-linejoin="round"/>
<path d="M268.0 230.0 C272.7 228.7 287.3 221.0 296.0 222.0 C304.7 223.0 311.8 230.5 320.0 236.0 C328.2 241.5 338.3 248.5 345.0 255.0 C351.7 261.5 355.8 268.5 360.0 275.0 C364.2 281.5 368.3 290.8 370.0 294.0" fill="none" stroke="#f4fbf6" stroke-width="1.3" stroke-linecap="round" stroke-linejoin="round"/>
<path d="M262.0 212.0 C262.5 216.7 265.0 226.3 265.0 240.0 C265.0 253.7 262.5 285.0 262.0 294.0" fill="none" stroke="#f4fbf6" stroke-width="1.3" stroke-linecap="round" stroke-linejoin="round"/>
<path d="M300.0 200.0 C303.3 202.5 313.3 210.8 320.0 215.0 C326.7 219.2 332.5 222.8 340.0 225.0 C347.5 227.2 360.8 227.5 365.0 228.0" fill="none" stroke="#f4fbf6" stroke-width="1.3" stroke-linecap="round" stroke-linejoin="round"/>
<path d="M240.0 250.0 C238.3 252.0 235.0 258.7 230.0 262.0 C225.0 265.3 216.7 268.3 210.0 270.0 C203.3 271.7 193.3 271.7 190.0 272.0" fill="none" stroke="#f4fbf6" stroke-width="1.3" stroke-linecap="round" stroke-linejoin="round"/>
<path d="M270.0 90.0 C269.7 95.0 268.0 110.0 268.0 120.0 C268.0 130.0 268.8 138.3 270.0 150.0 C271.2 161.7 274.2 183.3 275.0 190.0" fill="none" stroke="#f4fbf6" stroke-width="1.3" stroke-linecap="round" stroke-linejoin="round"/>
<path d="M214.0 140.0 C218.3 140.0 230.7 140.3 240.0 140.0 C249.3 139.7 260.0 138.0 270.0 138.0 C280.0 138.0 290.0 139.3 300.0 140.0 C310.0 140.7 325.0 141.7 330.0 142.0" fill="none" stroke="#f4fbf6" stroke-width="1.3" stroke-linecap="round" stroke-linejoin="round"/>
<path d="M225.0 110.0 C229.2 111.3 243.8 113.8 250.0 118.0 C256.2 122.2 260.0 132.2 262.0 135.0" fill="none" stroke="#f4fbf6" stroke-width="1.3" stroke-linecap="round" stroke-linejoin="round"/>
<path d="M290.0 165.0 C291.7 162.5 295.3 155.8 300.0 150.0 C304.7 144.2 315.0 133.3 318.0 130.0" fill="none" stroke="#f4fbf6" stroke-width="1.3" stroke-linecap="round" stroke-linejoin="round"/>
<path d="M230.0 175.0 C232.5 172.5 239.7 164.2 245.0 160.0 C250.3 155.8 259.2 151.7 262.0 150.0" fill="none" stroke="#f4fbf6" stroke-width="1.3" stroke-linecap="round" stroke-linejoin="round"/>
<path d="M285.0 190.0 C287.5 193.3 297.2 203.3 300.0 210.0 C302.8 216.7 301.7 226.7 302.0 230.0" fill="none" stroke="#f4fbf6" stroke-width="1.3" stroke-linecap="round" stroke-linejoin="round"/>
<path d="M178.0 100.0 C180.8 101.7 189.3 107.0 195.0 110.0 C200.7 113.0 209.2 116.7 212.0 118.0" fill="none" stroke="#f4fbf6" stroke-width="1.3" stroke-linecap="round" stroke-linejoin="round"/>
<path d="M160.0 120.0 C164.2 121.0 177.2 124.3 185.0 126.0 C192.8 127.7 203.3 129.3 207.0 130.0" fill="none" stroke="#f4fbf6" stroke-width="1.3" stroke-linecap="round" stroke-linejoin="round"/>
<path d="M0.0 120.0 C3.3 120.8 13.3 124.7 20.0 125.0 C26.7 125.3 36.7 122.5 40.0 122.0" fill="none" stroke="#f4fbf6" stroke-width="1.3" stroke-linecap="round" stroke-linejoin="round"/>
<path d="M230.0 0.0 C231.3 3.3 234.7 14.2 238.0 20.0 C241.3 25.8 248.0 32.5 250.0 35.0" fill="none" stroke="#e9f6ee" stroke-width="0.9" stroke-linecap="round"/>
<path d="M0.0 70.0 C2.5 71.7 10.0 76.7 15.0 80.0 C20.0 83.3 27.5 88.3 30.0 90.0" fill="none" stroke="#e9f6ee" stroke-width="0.9" stroke-linecap="round"/>
<path d="M130.0 210.0 C133.3 210.8 143.3 214.7 150.0 215.0 C156.7 215.3 166.7 212.5 170.0 212.0" fill="none" stroke="#e9f6ee" stroke-width="0.9" stroke-linecap="round"/>
<path d="M60.0 250.0 C61.7 253.3 66.7 262.7 70.0 270.0 C73.3 277.3 78.3 290.0 80.0 294.0" fill="none" stroke="#e9f6ee" stroke-width="0.9" stroke-linecap="round"/>
<path d="M520.0 260.0 C522.5 262.5 529.3 271.7 535.0 275.0 C540.7 278.3 550.8 279.2 554.0 280.0" fill="none" stroke="#e9f6ee" stroke-width="0.9" stroke-linecap="round"/>
<path d="M500.0 105.0 C503.3 105.8 513.3 107.5 520.0 110.0 C526.7 112.5 536.7 118.3 540.0 120.0" fill="none" stroke="#e9f6ee" stroke-width="0.9" stroke-linecap="round"/>
<path d="M390.0 180.0 C391.7 183.3 399.2 193.3 400.0 200.0 C400.8 206.7 395.8 216.7 395.0 220.0" fill="none" stroke="#e9f6ee" stroke-width="0.9" stroke-linecap="round"/>
<path d="M380.0 240.0 C381.7 243.3 389.2 253.3 390.0 260.0 C390.8 266.7 385.8 276.7 385.0 280.0" fill="none" stroke="#e9f6ee" stroke-width="0.9" stroke-linecap="round"/>
<path d="M540.0 200.0 C538.3 205.0 529.2 221.7 530.0 230.0 C530.8 238.3 542.5 246.7 545.0 250.0" fill="none" stroke="#e9f6ee" stroke-width="0.9" stroke-linecap="round"/>
<path d="M240.0 120.0 C242.5 121.7 248.3 127.5 255.0 130.0 C261.7 132.5 275.8 134.2 280.0 135.0" fill="none" stroke="#e9f6ee" stroke-width="0.9" stroke-linecap="round"/>
<path d="M285.0 100.0 C287.5 102.5 295.8 110.0 300.0 115.0 C304.2 120.0 308.3 127.5 310.0 130.0" fill="none" stroke="#e9f6ee" stroke-width="0.9" stroke-linecap="round"/>
<path d="M220.0 150.0 C222.5 152.5 230.0 160.8 235.0 165.0 C240.0 169.2 247.5 173.3 250.0 175.0" fill="none" stroke="#e9f6ee" stroke-width="0.9" stroke-linecap="round"/>
<path d="M310.0 150.0 C311.7 151.7 317.5 155.8 320.0 160.0 C322.5 164.2 324.2 172.5 325.0 175.0" fill="none" stroke="#e9f6ee" stroke-width="0.9" stroke-linecap="round"/>
<path d="M280.0 150.0 C282.5 151.7 290.8 156.7 295.0 160.0 C299.2 163.3 303.3 168.3 305.0 170.0" fill="none" stroke="#e9f6ee" stroke-width="0.9" stroke-linecap="round"/>
<path d="M0.0 216.0 C3.7 217.0 13.2 219.0 22.0 222.0 C30.8 225.0 44.2 231.7 53.0 234.0 C61.8 236.3 66.3 236.0 75.0 236.0 C83.7 236.0 96.3 236.5 105.0 234.0 C113.7 231.5 118.8 223.5 127.0 221.0 C135.2 218.5 147.7 219.3 154.0 219.0 C160.3 218.7 157.3 219.9 165.0 219.0 C172.7 218.1 191.2 215.9 200.0 213.6 C208.8 211.3 212.3 206.2 217.6 205.0 C222.9 203.8 226.7 204.6 231.7 206.6 C236.7 208.6 242.3 212.6 247.5 217.0 C252.7 221.4 258.1 227.2 263.0 233.0 C267.9 238.8 272.8 246.5 277.0 252.0 C281.2 257.5 285.7 261.2 288.0 266.0 C290.3 270.8 290.3 276.3 291.0 281.0 C291.7 285.7 291.8 291.8 292.0 294.0" fill="none" stroke="#f3b53f" stroke-width="3.7" stroke-linecap="round" stroke-linejoin="round"/>
<path d="M206.0 294.0 C207.2 287.0 211.7 261.6 213.0 252.0 C214.3 242.4 214.2 241.9 214.0 236.4 C213.8 230.9 212.3 225.1 211.5 219.0 C210.7 212.9 209.9 206.3 209.0 199.6 C208.1 192.8 206.3 186.8 206.0 178.5 C205.7 170.2 206.5 159.2 207.0 150.0 C207.5 140.8 207.7 130.9 209.0 123.6 C210.3 116.3 211.9 111.3 214.6 106.0 C217.3 100.7 220.9 95.3 225.0 92.0 C229.1 88.7 232.0 87.0 239.0 86.0 C246.0 85.0 257.0 86.3 267.0 86.0 C277.0 85.7 291.0 85.9 299.0 84.0 C307.0 82.1 310.2 79.2 315.0 74.5 C319.8 69.8 324.7 61.4 328.0 56.0 C331.3 50.6 331.7 46.7 335.0 42.0 C338.3 37.3 343.0 30.5 348.0 28.0 C353.0 25.5 358.0 27.3 365.0 27.0 C372.0 26.7 382.7 26.7 390.0 26.0 C397.3 25.3 402.2 22.8 409.0 23.0 C415.8 23.2 423.0 25.7 431.0 27.0 C439.0 28.3 448.7 31.5 457.0 31.0 C465.3 30.5 473.0 26.0 481.0 24.0 C489.0 22.0 497.3 19.0 505.0 19.0 C512.7 19.0 518.8 23.5 527.0 24.0 C535.2 24.5 549.5 22.3 554.0 22.0" fill="none" stroke="#f3b53f" stroke-width="3.9000000000000004" stroke-linecap="round" stroke-linejoin="round"/>
<path d="M527.0 24.0 C528.5 22.8 531.5 19.5 536.0 17.0 C540.5 14.5 551.0 10.3 554.0 9.0" fill="none" stroke="#f3b53f" stroke-width="3.3" stroke-linecap="round" stroke-linejoin="round"/>
<path d="M274.0 0.0 C274.2 4.7 273.3 20.7 275.0 28.0 C276.7 35.3 282.0 38.8 284.0 44.0 C286.0 49.2 287.5 53.7 287.0 59.0 C286.5 64.3 284.3 71.1 281.0 76.0 C277.7 80.9 271.2 84.4 267.0 88.5 C262.8 92.6 258.0 97.0 256.0 100.8 C254.0 104.6 257.5 107.6 255.0 111.4 C252.5 115.2 244.8 119.2 241.0 123.6 C237.2 128.0 233.5 133.3 232.0 137.7 C230.5 142.1 230.5 145.9 232.0 150.0 C233.5 154.1 236.4 159.0 241.0 162.0 C245.6 165.0 252.5 166.4 259.7 168.0 C266.9 169.6 278.6 171.1 284.0 171.5 C289.4 171.9 290.0 171.2 292.0 170.5 C294.0 169.8 295.3 168.1 296.0 167.6" fill="none" stroke="#f3b53f" stroke-width="3.3" stroke-linecap="round" stroke-linejoin="round"/>
<path d="M296.0 167.6 C297.3 168.7 300.5 169.8 304.0 174.0 C307.5 178.2 312.7 186.6 317.0 192.6 C321.3 198.6 326.4 205.4 330.0 210.0 C333.6 214.6 334.8 216.5 338.8 220.4 C342.8 224.3 348.3 228.3 354.0 233.7 C359.7 239.1 366.7 246.7 373.0 252.7 C379.3 258.7 386.3 264.5 392.0 269.9 C397.7 275.3 403.3 281.0 407.0 285.0 C410.7 289.0 412.8 292.5 414.0 294.0" fill="none" stroke="#f3b53f" stroke-width="3.2" stroke-linecap="round" stroke-linejoin="round"/>
<path d="M0.0 89.0 C3.7 89.0 11.3 88.5 22.0 89.0 C32.7 89.5 44.3 90.0 64.0 92.0 C83.7 94.0 124.8 98.8 140.0 101.0 C155.2 103.2 146.7 103.3 155.0 105.0 C163.3 106.7 180.3 109.5 190.0 111.4 C199.7 113.3 206.6 115.0 213.0 116.6 C219.4 118.2 224.0 119.8 228.7 121.0 C233.4 122.2 238.9 123.2 241.0 123.6" fill="none" stroke="#f3b53f" stroke-width="3.1" stroke-linecap="round" stroke-linejoin="round"/>
<path d="M127.0 286.0 C129.2 283.2 134.8 274.7 140.0 269.0 C145.2 263.3 153.2 256.2 158.0 252.0 C162.8 247.8 163.5 245.2 168.5 243.5 C173.5 241.8 183.9 244.3 188.0 241.7 C192.1 239.1 191.0 230.9 193.0 227.7 C195.0 224.5 197.1 223.3 200.0 222.4 C202.9 221.5 208.8 222.4 210.6 222.4" fill="none" stroke="#f3b53f" stroke-width="3.1" stroke-linecap="round" stroke-linejoin="round"/>
<path d="M259.7 168.0 C259.1 171.2 258.0 182.3 256.0 187.0 C254.0 191.7 251.0 193.3 247.5 196.0 C244.0 198.7 237.1 201.8 235.0 203.0" fill="none" stroke="#f3b53f" stroke-width="3.1" stroke-linecap="round" stroke-linejoin="round"/>
<path d="M0.0 216.0 C3.7 217.0 13.2 219.0 22.0 222.0 C30.8 225.0 44.2 231.7 53.0 234.0 C61.8 236.3 66.3 236.0 75.0 236.0 C83.7 236.0 96.3 236.5 105.0 234.0 C113.7 231.5 118.8 223.5 127.0 221.0 C135.2 218.5 147.7 219.3 154.0 219.0 C160.3 218.7 157.3 219.9 165.0 219.0 C172.7 218.1 191.2 215.9 200.0 213.6 C208.8 211.3 212.3 206.2 217.6 205.0 C222.9 203.8 226.7 204.6 231.7 206.6 C236.7 208.6 242.3 212.6 247.5 217.0 C252.7 221.4 258.1 227.2 263.0 233.0 C267.9 238.8 272.8 246.5 277.0 252.0 C281.2 257.5 285.7 261.2 288.0 266.0 C290.3 270.8 290.3 276.3 291.0 281.0 C291.7 285.7 291.8 291.8 292.0 294.0" fill="none" stroke="#fde39c" stroke-width="2.1" stroke-linecap="round" stroke-linejoin="round"/>
<path d="M206.0 294.0 C207.2 287.0 211.7 261.6 213.0 252.0 C214.3 242.4 214.2 241.9 214.0 236.4 C213.8 230.9 212.3 225.1 211.5 219.0 C210.7 212.9 209.9 206.3 209.0 199.6 C208.1 192.8 206.3 186.8 206.0 178.5 C205.7 170.2 206.5 159.2 207.0 150.0 C207.5 140.8 207.7 130.9 209.0 123.6 C210.3 116.3 211.9 111.3 214.6 106.0 C217.3 100.7 220.9 95.3 225.0 92.0 C229.1 88.7 232.0 87.0 239.0 86.0 C246.0 85.0 257.0 86.3 267.0 86.0 C277.0 85.7 291.0 85.9 299.0 84.0 C307.0 82.1 310.2 79.2 315.0 74.5 C319.8 69.8 324.7 61.4 328.0 56.0 C331.3 50.6 331.7 46.7 335.0 42.0 C338.3 37.3 343.0 30.5 348.0 28.0 C353.0 25.5 358.0 27.3 365.0 27.0 C372.0 26.7 382.7 26.7 390.0 26.0 C397.3 25.3 402.2 22.8 409.0 23.0 C415.8 23.2 423.0 25.7 431.0 27.0 C439.0 28.3 448.7 31.5 457.0 31.0 C465.3 30.5 473.0 26.0 481.0 24.0 C489.0 22.0 497.3 19.0 505.0 19.0 C512.7 19.0 518.8 23.5 527.0 24.0 C535.2 24.5 549.5 22.3 554.0 22.0" fill="none" stroke="#fde39c" stroke-width="2.3000000000000003" stroke-linecap="round" stroke-linejoin="round"/>
<path d="M527.0 24.0 C528.5 22.8 531.5 19.5 536.0 17.0 C540.5 14.5 551.0 10.3 554.0 9.0" fill="none" stroke="#fde39c" stroke-width="1.7" stroke-linecap="round" stroke-linejoin="round"/>
<path d="M274.0 0.0 C274.2 4.7 273.3 20.7 275.0 28.0 C276.7 35.3 282.0 38.8 284.0 44.0 C286.0 49.2 287.5 53.7 287.0 59.0 C286.5 64.3 284.3 71.1 281.0 76.0 C277.7 80.9 271.2 84.4 267.0 88.5 C262.8 92.6 258.0 97.0 256.0 100.8 C254.0 104.6 257.5 107.6 255.0 111.4 C252.5 115.2 244.8 119.2 241.0 123.6 C237.2 128.0 233.5 133.3 232.0 137.7 C230.5 142.1 230.5 145.9 232.0 150.0 C233.5 154.1 236.4 159.0 241.0 162.0 C245.6 165.0 252.5 166.4 259.7 168.0 C266.9 169.6 278.6 171.1 284.0 171.5 C289.4 171.9 290.0 171.2 292.0 170.5 C294.0 169.8 295.3 168.1 296.0 167.6" fill="none" stroke="#fde39c" stroke-width="1.7" stroke-linecap="round" stroke-linejoin="round"/>
<path d="M296.0 167.6 C297.3 168.7 300.5 169.8 304.0 174.0 C307.5 178.2 312.7 186.6 317.0 192.6 C321.3 198.6 326.4 205.4 330.0 210.0 C333.6 214.6 334.8 216.5 338.8 220.4 C342.8 224.3 348.3 228.3 354.0 233.7 C359.7 239.1 366.7 246.7 373.0 252.7 C379.3 258.7 386.3 264.5 392.0 269.9 C397.7 275.3 403.3 281.0 407.0 285.0 C410.7 289.0 412.8 292.5 414.0 294.0" fill="none" stroke="#fde39c" stroke-width="1.5999999999999999" stroke-linecap="round" stroke-linejoin="round"/>
<path d="M0.0 89.0 C3.7 89.0 11.3 88.5 22.0 89.0 C32.7 89.5 44.3 90.0 64.0 92.0 C83.7 94.0 124.8 98.8 140.0 101.0 C155.2 103.2 146.7 103.3 155.0 105.0 C163.3 106.7 180.3 109.5 190.0 111.4 C199.7 113.3 206.6 115.0 213.0 116.6 C219.4 118.2 224.0 119.8 228.7 121.0 C233.4 122.2 238.9 123.2 241.0 123.6" fill="none" stroke="#fde39c" stroke-width="1.5" stroke-linecap="round" stroke-linejoin="round"/>
<path d="M127.0 286.0 C129.2 283.2 134.8 274.7 140.0 269.0 C145.2 263.3 153.2 256.2 158.0 252.0 C162.8 247.8 163.5 245.2 168.5 243.5 C173.5 241.8 183.9 244.3 188.0 241.7 C192.1 239.1 191.0 230.9 193.0 227.7 C195.0 224.5 197.1 223.3 200.0 222.4 C202.9 221.5 208.8 222.4 210.6 222.4" fill="none" stroke="#fde39c" stroke-width="1.5" stroke-linecap="round" stroke-linejoin="round"/>
<path d="M259.7 168.0 C259.1 171.2 258.0 182.3 256.0 187.0 C254.0 191.7 251.0 193.3 247.5 196.0 C244.0 198.7 237.1 201.8 235.0 203.0" fill="none" stroke="#fde39c" stroke-width="1.5" stroke-linecap="round" stroke-linejoin="round"/>
<rect x="63" y="89" width="13.5" height="10" rx="1" fill="#d9534f"/>
<text x="69.75" y="96.7" text-anchor="middle" font-family="Liberation Sans" font-weight="bold" font-size="7.4" fill="#fff">94</text>
<rect x="280" y="81" width="15" height="9.5" rx="1" fill="#d9534f"/>
<text x="287.5" y="88.2" text-anchor="middle" font-family="Liberation Sans" font-weight="bold" font-size="7.4" fill="#fff">A8</text>
<rect x="251" y="96.5" width="9" height="9" rx="1" fill="#d9534f"/>
<text x="255.5" y="103.2" text-anchor="middle" font-family="Liberation Sans" font-weight="bold" font-size="7.4" fill="#fff">5</text>
<rect x="155" y="245" width="14" height="9.5" rx="1" fill="#d9534f"/>
<text x="162.0" y="252.2" text-anchor="middle" font-family="Liberation Sans" font-weight="bold" font-size="7.4" fill="#fff">35</text>
<rect x="384" y="21" width="17.5" height="9" rx="1" fill="#5f9e4d"/>
<text x="392.75" y="27.7" text-anchor="middle" font-family="Liberation Sans" font-weight="bold" font-size="7.4" fill="#fff">E67</text>
<rect x="505" y="15.5" width="17.5" height="8.5" rx="1" fill="#5f9e4d"/>
<text x="513.75" y="21.7" text-anchor="middle" font-family="Liberation Sans" font-weight="bold" font-size="7.4" fill="#fff">E67</text>
<text x="-3" y="60" font-family="Liberation Sans" font-size="10.4" fill="#3c4043" stroke="#fff" stroke-width="2.2" stroke-opacity="0.7" paint-order="stroke" >epanów</text>
<text x="21" y="75" font-family="Liberation Sans" font-size="10.4" fill="#3c4043" stroke="#fff" stroke-width="2.2" stroke-opacity="0.7" paint-order="stroke" >Święte</text>
<text x="-6" y="86" font-family="Liberation Sans" font-size="10.4" fill="#3c4043" stroke="#fff" stroke-width="2.2" stroke-opacity="0.7" paint-order="stroke" >лёнска</text>
<text x="-1" y="97" font-family="Liberation Sans" font-size="10.4" fill="#3c4043" stroke="#fff" stroke-width="2.2" stroke-opacity="0.7" paint-order="stroke" >ląska</text>
<text x="64" y="61" font-family="Liberation Sans" font-size="10.4" fill="#3c4043" stroke="#fff" stroke-width="2.2" stroke-opacity="0.7" paint-order="stroke" >Менкиня</text>
<text x="66" y="72" font-family="Liberation Sans" font-size="10.4" fill="#3c4043" stroke="#fff" stroke-width="2.2" stroke-opacity="0.7" paint-order="stroke" >Miękinia</text>
<text x="144" y="65" font-family="Liberation Sans" font-size="10.4" fill="#3c4043" stroke="#fff" stroke-width="2.2" stroke-opacity="0.7" paint-order="stroke" >Wilkszyn</text>
<text x="88" y="102" font-family="Liberation Sans" font-size="10.4" fill="#3c4043" stroke="#fff" stroke-width="2.2" stroke-opacity="0.7" paint-order="stroke" >Wróblowice</text>
<text x="96" y="118" font-family="Liberation Sans" font-size="10.4" fill="#3c4043" stroke="#fff" stroke-width="2.2" stroke-opacity="0.7" paint-order="stroke" >Лейтен</text>
<text x="97" y="129" font-family="Liberation Sans" font-size="10.4" fill="#3c4043" stroke="#fff" stroke-width="2.2" stroke-opacity="0.7" paint-order="stroke" >Lutynia</text>
<text x="194" y="11" font-family="Liberation Sans" font-size="10.4" fill="#3c4043" stroke="#fff" stroke-width="2.2" stroke-opacity="0.7" paint-order="stroke" >Pęgów</text>
<text x="249" y="4" font-family="Liberation Sans" font-size="10.4" fill="#3c4043" stroke="#fff" stroke-width="2.2" stroke-opacity="0.7" paint-order="stroke" >Вишня-Мала</text>
<text x="249" y="16" font-family="Liberation Sans" font-size="10.4" fill="#3c4043" stroke="#fff" stroke-width="2.2" stroke-opacity="0.7" paint-order="stroke" >Wisznia Mała</text>
<text x="348" y="24" font-family="Liberation Sans" font-size="10.4" fill="#3c4043" stroke="#fff" stroke-width="2.2" stroke-opacity="0.7" paint-order="stroke" >Łozina</text>
<text x="264" y="75" font-family="Liberation Sans" font-size="10.4" fill="#3c4043" stroke="#fff" stroke-width="2.2" stroke-opacity="0.7" paint-order="stroke" >Psary</text>
<text x="345" y="77" font-family="Liberation Sans" font-size="10.4" fill="#3c4043" stroke="#fff" stroke-width="2.2" stroke-opacity="0.7" paint-order="stroke" >Длуголенка</text>
<text x="352" y="86" font-family="Liberation Sans" font-size="10.4" fill="#3c4043" stroke="#fff" stroke-width="2.2" stroke-opacity="0.7" paint-order="stroke" >Długołęka</text>
<text x="340" y="116" font-family="Liberation Sans" font-size="10.4" fill="#3c4043" stroke="#fff" stroke-width="2.2" stroke-opacity="0.7" paint-order="stroke" >Kiełczów</text>
<text x="512" y="8" font-family="Liberation Sans" font-size="10.4" fill="#3c4043" stroke="#fff" stroke-width="2.2" stroke-opacity="0.7" paint-order="stroke" >Sokołowi</text>
<text x="537" y="31" font-family="Liberation Sans" font-size="10.4" fill="#3c4043" stroke="#fff" stroke-width="2.2" stroke-opacity="0.7" paint-order="stroke" >Cies</text>
<text x="476" y="38" font-family="Liberation Sans" font-size="10.4" fill="#3c4043" stroke="#fff" stroke-width="2.2" stroke-opacity="0.7" paint-order="stroke" >Олесница</text>
<text x="480" y="49" font-family="Liberation Sans" font-size="10.4" fill="#3c4043" stroke="#fff" stroke-width="2.2" stroke-opacity="0.7" paint-order="stroke" >Oleśnica</text>
<text x="413" y="66" font-family="Liberation Sans" font-size="10.4" fill="#3c4043" stroke="#fff" stroke-width="2.2" stroke-opacity="0.7" paint-order="stroke" >Borowa</text>
<text x="0" y="208" font-family="Liberation Sans" font-size="10.4" fill="#3c4043" stroke="#fff" stroke-width="2.2" stroke-opacity="0.7" paint-order="stroke" >омлоты</text>
<text x="-1" y="219" font-family="Liberation Sans" font-size="10.4" fill="#3c4043" stroke="#fff" stroke-width="2.2" stroke-opacity="0.7" paint-order="stroke" >omłoty</text>
<text x="56" y="217" font-family="Liberation Sans" font-size="10.4" fill="#3c4043" stroke="#fff" stroke-width="2.2" stroke-opacity="0.7" paint-order="stroke" >Конты-Вроцлавске</text>
<text x="92" y="228" font-family="Liberation Sans" font-size="10.4" fill="#3c4043" stroke="#fff" stroke-width="2.2" stroke-opacity="0.7" paint-order="stroke" >Kąty</text>
<text x="73" y="238" font-family="Liberation Sans" font-size="10.4" fill="#3c4043" stroke="#fff" stroke-width="2.2" stroke-opacity="0.7" paint-order="stroke" >Wrocławskie</text>
<text x="162" y="185" font-family="Liberation Sans" font-size="10.4" fill="#3c4043" stroke="#fff" stroke-width="2.2" stroke-opacity="0.7" paint-order="stroke" >Smolec</text>
<text x="13" y="280" font-family="Liberation Sans" font-size="10.4" fill="#3c4043" stroke="#fff" stroke-width="2.2" stroke-opacity="0.7" paint-order="stroke" >Меткув</text>
<text x="186" y="284" font-family="Liberation Sans" font-size="10.4" fill="#3c4043" stroke="#fff" stroke-width="2.2" stroke-opacity="0.7" paint-order="stroke" >Кобежице</text>
<text x="214" y="204" font-family="Liberation Sans" font-size="10.4" fill="#3c4043" stroke="#fff" stroke-width="2.2" stroke-opacity="0.7" paint-order="stroke" >Беланы</text>
<text x="203" y="214" font-family="Liberation Sans" font-size="10.4" fill="#3c4043" stroke="#fff" stroke-width="2.2" stroke-opacity="0.7" paint-order="stroke" >Вроцлавске</text>
<text x="216" y="226" font-family="Liberation Sans" font-size="10.4" fill="#3c4043" stroke="#fff" stroke-width="2.2" stroke-opacity="0.7" paint-order="stroke" >Bielany</text>
<text x="203" y="236" font-family="Liberation Sans" font-size="10.4" fill="#3c4043" stroke="#fff" stroke-width="2.2" stroke-opacity="0.7" paint-order="stroke" >Wrocławskie</text>
<text x="342" y="166" font-family="Liberation Sans" font-size="10.4" fill="#3c4043" stroke="#fff" stroke-width="2.2" stroke-opacity="0.7" paint-order="stroke" >Dobrzykowice</text>
<text x="326" y="220" font-family="Liberation Sans" font-size="10.4" fill="#3c4043" stroke="#fff" stroke-width="2.2" stroke-opacity="0.7" paint-order="stroke" >Сехнице</text>
<text x="324" y="231" font-family="Liberation Sans" font-size="10.4" fill="#3c4043" stroke="#fff" stroke-width="2.2" stroke-opacity="0.7" paint-order="stroke" >Siechnice</text>
<text x="387" y="208" font-family="Liberation Sans" font-size="10.4" fill="#3c4043" stroke="#fff" stroke-width="2.2" stroke-opacity="0.7" paint-order="stroke" >Черница</text>
<text x="388" y="219" font-family="Liberation Sans" font-size="10.4" fill="#3c4043" stroke="#fff" stroke-width="2.2" stroke-opacity="0.7" paint-order="stroke" >Czernica</text>
<text x="414" y="233" font-family="Liberation Sans" font-size="10.4" fill="#3c4043" stroke="#fff" stroke-width="2.2" stroke-opacity="0.7" paint-order="stroke" >Ельч-Лясковице</text>
<text x="415" y="243" font-family="Liberation Sans" font-size="10.4" fill="#3c4043" stroke="#fff" stroke-width="2.2" stroke-opacity="0.7" paint-order="stroke" >Jelcz-Laskowice</text>
<text x="242" y="145" font-family="Liberation Sans" font-size="17.3" fill="#fff" stroke="#fff" stroke-width="2.2" stroke-opacity="0.7" opacity="0.8">Вроцлав</text>
<text x="242" y="145" font-family="Liberation Sans" font-size="17.3" fill="#202124" stroke-width="0.2" stroke="#202124">Вроцлав</text>
<text x="242.5" y="162" font-family="Liberation Sans" font-size="17.3" fill="#fff" stroke="#fff" stroke-width="2.2" stroke-opacity="0.7" opacity="0.8">Wrocław</text>
<text x="242.5" y="162" font-family="Liberation Sans" font-size="17.3" fill="#202124" stroke-width="0.2" stroke="#202124">Wrocław</text>
<text x="0" y="0" font-family="Liberation Sans" font-size="11.5" fill="#2462c9" stroke="#2462c9" stroke-width="0.3" transform="translate(192.5,48) rotate(67)">Одра</text>
<text x="0" y="0" font-family="Liberation Sans" font-size="11.5" fill="#2462c9" stroke="#2462c9" stroke-width="0.3" transform="translate(357,190) rotate(22)">Одра</text>
<text x="0" y="0" font-family="Liberation Sans" font-size="11.5" fill="#2462c9" stroke="#2462c9" stroke-width="0.3" transform="translate(444,254) rotate(90)">Одра</text>
<path d="M269 120.0 C267.8 113.5 259.2 108.5 259.2 101.5 A9.8 9.8 0 1 1 278.8 101.5 C278.8 108.5 270.2 113.5 269 120.0Z" fill="#ea4335" stroke="#c5221f" stroke-width="0.7"/>
<circle cx="269" cy="101.5" r="3.7" fill="#a50e0e"/>
<path d="M216.5 161.0 C215.3 154.5 206.7 149.5 206.7 142.5 A9.8 9.8 0 1 1 226.3 142.5 C226.3 149.5 217.7 154.5 216.5 161.0Z" fill="#ea4335" stroke="#c5221f" stroke-width="0.7"/>
<circle cx="216.5" cy="142.5" r="3.7" fill="#a50e0e"/>
<path d="M292 174.0 C290.8 167.5 282.2 162.5 282.2 155.5 A9.8 9.8 0 1 1 301.8 155.5 C301.8 162.5 293.2 167.5 292 174.0Z" fill="#ea4335" stroke="#c5221f" stroke-width="0.7"/>
<circle cx="292" cy="155.5" r="3.7" fill="#a50e0e"/>
</svg>
<div class="abs" style="left:516px;top:215.5px;width:30px;height:60px;background:#fff;border-radius:2px;box-shadow:0 1px 4px rgba(0,0,0,.3)"></div>
<svg class="abs" style="left:516px;top:215.5px" width="30" height="60">
 <rect x="7.8" y="13" width="14.4" height="3" fill="#666"/><rect x="13.5" y="7.3" width="3" height="14.4" fill="#666"/>
 <rect x="4" y="30" width="22" height="0.8" fill="#e6e6e6"/>
 <rect x="7.8" y="44.3" width="14.4" height="3" fill="#666"/>
</svg>
<div class="abs" style="left:22px;top:283.5px;width:532px;height:10.5px;background:rgba(245,245,245,.55)"></div><div class="abs" style="left:0;top:293px;width:22px;height:1px;background:#6d9eeb"></div>
<div class="abs" style="left:24.5px;top:283.6px;font-size:7.6px;line-height:9px;color:#111;white-space:nowrap">Быстрые клавиши</div>
<div class="abs" style="left:94px;top:285px;width:1px;height:8px;background:#d8d8d8"></div>
<div class="abs" style="left:98.5px;top:283.6px;font-size:7.3px;line-height:9px;color:#111;white-space:nowrap;letter-spacing:-0.12px">Картографические данные © 2023 GeoBasis-DE/BKG (©2009), Google</div>
<div class="abs" style="left:349px;top:283.6px;font-size:7.7px;line-height:9px;color:#111;white-space:nowrap;letter-spacing:-0.1px">Условия использования</div>
<div class="abs" style="left:443.5px;top:283.6px;font-size:7.5px;line-height:9px;color:#111;white-space:nowrap;letter-spacing:-0.1px">Сообщить об ошибке на карте</div>
<svg class="abs" style="left:7px;top:275px;opacity:.8" width="46" height="14"><text x="0.5" y="11.5" font-family="Liberation Sans" font-weight="bold" font-size="12.6" textLength="42" lengthAdjust="spacingAndGlyphs" stroke="#fff" stroke-width="1.5" paint-order="stroke" stroke-opacity=".8"><tspan fill="#4285f4">G</tspan><tspan fill="#ea4335">o</tspan><tspan fill="#fbbc05">o</tspan><tspan fill="#4285f4">g</tspan><tspan fill="#34a853">l</tspan><tspan fill="#ea4335">e</tspan></text></svg>
</div>

<!-- right column -->
<div class="abs" style="left:710px;top:360px;width:93px;height:93px;border-radius:50%;background:#f3f6f9;box-shadow:0 2px 8px rgba(20,40,80,.10)"></div>
<div class="abs" style="left:724px;top:373px;width:66px;height:66px;border-radius:50%;background:#afdcf7"></div>
<svg class="abs" style="left:740px;top:386px" width="34" height="40">
 <ellipse cx="17" cy="34.5" rx="2.5" ry="1.2" fill="#7fb2d3" opacity=".6"/>
 <path d="M17 34.5 C16.3 29.5 7.6 23.5 7.6 14.3 A9.4 9.4 0 1 1 26.4 14.3 C26.4 23.5 17.7 29.5 17 34.5Z" fill="#0a9cf5" stroke="#fff" stroke-width="0.6" stroke-opacity=".6"/>
 <circle cx="17" cy="14.2" r="3.2" fill="#0b5d8f"/>
</svg>

<div class="abs" style="left:613px;top:460px;width:288px;text-align:center;font-size:21px;line-height:31.5px;color:#000">3 Instalatorzy<br>znajdujący się w pobliżu<br>Ciebie</div>
<div class="abs" style="left:613px;top:562px;width:288px;text-align:center;font-size:9.3px;line-height:11px;color:#8e949d;letter-spacing:-0.1px">Oferty od nich znajdziesz na swoim koncie na portalu</div>
<div class="abs" style="left:613px;top:581px;width:288px;height:32px;border:1px solid #acb0ba;border-radius:6px;background:#f6f8fb"></div>
<svg class="abs" style="left:700px;top:589px" width="14" height="16">
 <path d="M7 14 C6.5 11.5 2.2 8.5 2.2 5.6 A4.8 4.8 0 1 1 11.8 5.6 C11.8 8.5 7.5 11.5 7 14Z" fill="#9aa0a8"/>
 <circle cx="7" cy="5.6" r="1.7" fill="#f6f8fb"/>
</svg>
<div class="abs" style="left:720px;top:589px;font-size:12px;line-height:16px;letter-spacing:-0.4px;color:#000">Вроцлав, Польша</div>
<div class="abs" style="left:613px;top:619px;width:288px;height:34px;border-radius:3px;background:#0a9ef5;color:#fff;text-align:center;font-size:15px;line-height:34px;letter-spacing:-0.6px;-webkit-text-stroke:0.5px #fff">Do portalu</div>
</body></html>
